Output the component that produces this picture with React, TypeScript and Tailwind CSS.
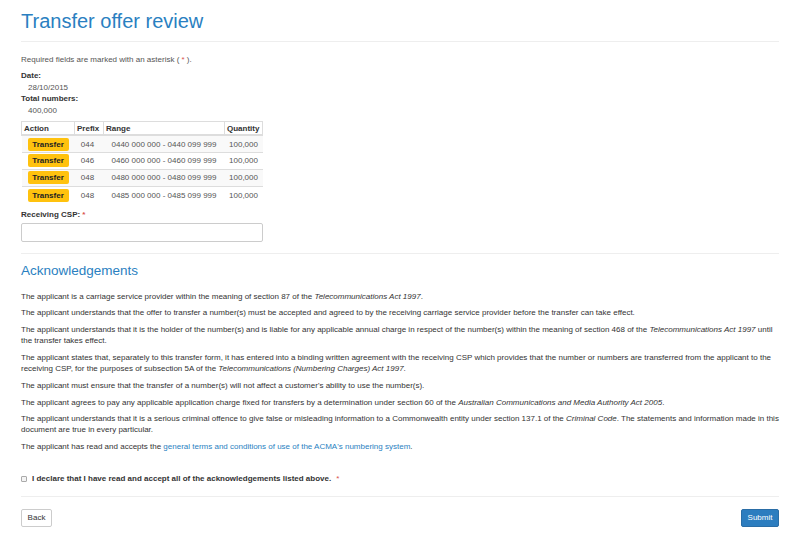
import React from "react";

const rows = [
  { prefix: "044", range: "0440 000 000 - 0440 099 999", qty: "100,000" },
  { prefix: "046", range: "0460 000 000 - 0460 099 999", qty: "100,000" },
  { prefix: "048", range: "0480 000 000 - 0480 099 999", qty: "100,000" },
  { prefix: "048", range: "0485 000 000 - 0485 099 999", qty: "100,000" },
];

export default function App() {
  return (
    <div
      className="w-[800px] min-h-[536px] bg-white px-[21px] text-[8px] leading-[11.2px] text-[#333]"
      style={{ fontFamily: '"Liberation Sans", Arial, sans-serif' }}
    >
      <h1 className="pt-[10px] text-[20px] leading-[22px] text-[#2a7fc1] font-normal">
        Transfer offer review
      </h1>
      <div className="mt-[9px] border-t border-[#eee]" />

      <p className="mt-[12px] text-[#555]">
        Required fields are marked with an asterisk ( <span className="text-[#d9534f]">*</span> ).
      </p>

      <dl className="mt-[5px] leading-[11.43px]">
        <dt className="font-bold">Date:</dt>
        <dd className="pl-[7px] text-[#555]">28/10/2015</dd>
        <dt className="font-bold">Total numbers:</dt>
        <dd className="pl-[7px] text-[#555]">400,000</dd>
      </dl>

      <table className="mt-[5px] w-[242px] border-collapse">
        <thead>
          <tr className="h-[14px]">
            <th className="w-[53px] border border-[#ddd] border-b-2 px-[2px] text-left font-bold">Action</th>
            <th className="w-[29px] border border-[#ddd] border-b-2 px-[2px] text-left font-bold">Prefix</th>
            <th className="w-[121px] border border-[#ddd] border-b-2 px-[2px] text-left font-bold">Range</th>
            <th className="border border-[#ddd] border-b-2 px-[2px] text-left font-bold">Quantity</th>
          </tr>
        </thead>
        <tbody>
          {rows.map((r, i) => (
            <tr
              key={i}
              className={`h-[17px] border-t border-[#ddd] ${i % 2 === 0 ? "bg-[#f9f9f9]" : "bg-white"} text-[#555]`}
            >
              <td className="text-center">
                <span className="inline-block w-[41px] rounded-[2px] bg-[#ffc20e] text-center font-bold leading-[13px] text-[#222]">
                  Transfer
                </span>
              </td>
              <td className="pr-[3px] text-center">{r.prefix}</td>
              <td className="text-center">{r.range}</td>
              <td className="text-center">{r.qty}</td>
            </tr>
          ))}
        </tbody>
      </table>

      <label className="mt-[6px] block font-bold">
        Receiving CSP: <span className="text-[#d9534f]">*</span>
      </label>
      <div className="mt-[2px] h-[19px] w-[242px] rounded-[2px] border border-[#ccc] bg-white" />

      <div className="mt-[11px] border-t border-[#eee]" />

      <h3 className="mt-[9px] text-[13.5px] leading-[15px] text-[#2a7fc1] font-normal">Acknowledgements</h3>

      <div className="mt-[13px]">
        <p className="mb-[5.5px]">
          The applicant is a carriage service provider within the meaning of section 87 of the{" "}
          <em>Telecommunications Act 1997</em>.
        </p>
        <p className="mb-[5.5px]">
          The applicant understands that the offer to transfer a number(s) must be accepted and agreed to by the
          receiving carriage service provider before the transfer can take effect.
        </p>
        <p className="mb-[5.5px]">
          The applicant understands that it is the holder of the number(s) and is liable for any applicable annual
          charge in respect of the number(s) within the meaning of section 468 of the{" "}
          <em>Telecommunications Act 1997</em> until the transfer takes effect.
        </p>
        <p className="mb-[5.5px]">
          The applicant states that, separately to this transfer form, it has entered into a binding written
          agreement with the receiving CSP which provides that the number or numbers are transferred from the
          applicant to the receiving CSP, for the purposes of subsection 5A of the{" "}
          <em>Telecommunications (Numbering Charges) Act 1997</em>.
        </p>
        <p className="mb-[5.5px]">
          The applicant must ensure that the transfer of a number(s) will not affect a customer's ability to use the
          number(s).
        </p>
        <p className="mb-[5.5px]">
          The applicant agrees to pay any applicable application charge fixed for transfers by a determination under
          section 60 of the <em>Australian Communications and Media Authority Act 2005</em>.
        </p>
        <p className="mb-[5.5px]">
          The applicant understands that it is a serious criminal offence to give false or misleading information to
          a Commonwealth entity under section 137.1 of the <em>Criminal Code</em>. The statements and information
          made in this document are true in every particular.
        </p>
        <p className="mb-[5.5px]">
          The applicant has read and accepts the{" "}
          <a className="text-[#2a7fc1]">general terms and conditions of use of the ACMA's numbering system</a>.
        </p>
      </div>

      <div className="mt-[21px] flex items-center">
        <span className="inline-block h-[6px] w-[6px] rounded-[1px] border border-[#aaa] bg-[#f4f4f4]" />
        <span className="ml-[5px] font-bold">I declare that I have read and accept all of the acknowledgements listed above.</span>
        <span className="ml-[5px] text-[#d9534f]">*</span>
      </div>

      <div className="mt-[11px] border-t border-[#eee]" />

      <div className="mt-[12px] flex items-center justify-between">
        <button className="h-[18px] w-[31px] rounded-[2px] border border-[#ccc] bg-white text-[8px] text-[#333]">
          Back
        </button>
        <button className="h-[18px] w-[38px] rounded-[2px] border border-[#2a6da6] bg-[#2c7dbf] text-[8px] text-white">
          Submit
        </button>
      </div>
    </div>
  );
}
